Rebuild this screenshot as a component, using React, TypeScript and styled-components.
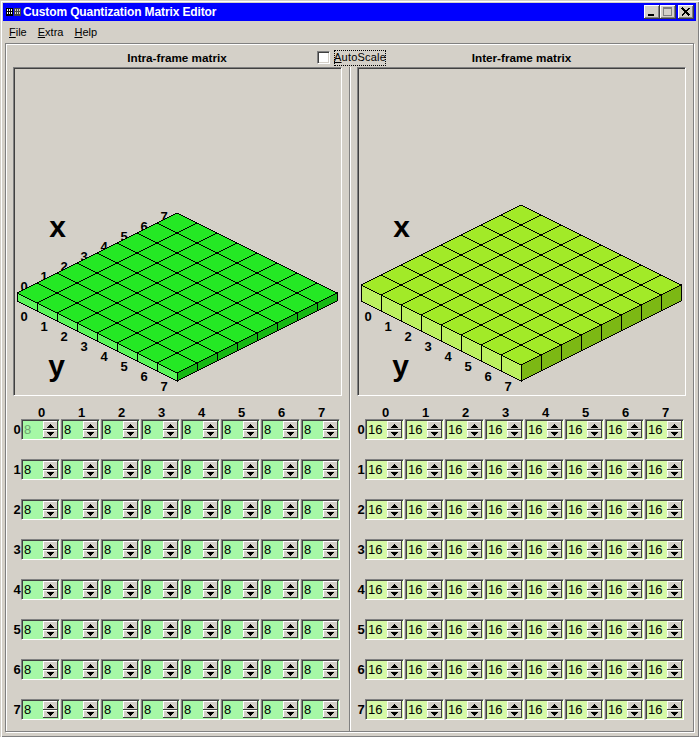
import React from "react";
import styled, { createGlobalStyle } from "styled-components";

const Global = createGlobalStyle`
  html, body { margin: 0; padding: 0; background: #d4d0c8; }
  * { box-sizing: border-box; }
`;

const Win = styled.div`
  width: 699px;
  height: 737px;
  padding: 3px;
  background: #d4d0c8;
  font-family: "Liberation Sans", Arial, sans-serif;
  font-size: 12px;
  color: #000;
  box-shadow: inset 1px 1px 0 #d4d0c8, inset 2px 2px 0 #fff, inset -1px -1px 0 #808080;
  overflow: hidden;
`;

const TitleBar = styled.div`
  height: 18px;
  background: #0000ff;
  color: #fff;
  display: flex;
  align-items: center;
  padding: 0 2px 0 3px;
`;

const TitleText = styled.span`
  font-weight: 700;
  font-size: 12px;
  letter-spacing: -0.12px;
  margin-left: 2px;
  flex: 1;
`;

const WinButtons = styled.div`
  display: flex;
  align-items: center;
`;

const WinButton = styled.div<{ $gap?: number }>`
  width: 16px;
  height: 14px;
  margin-left: ${(p) => p.$gap ?? 0}px;
  background: #d4d0c8;
  box-shadow: inset -1px -1px 0 #404040, inset 1px 1px 0 #fff, inset -2px -2px 0 #808080;
  display: flex;
  align-items: center;
  justify-content: center;
`;

const MenuBar = styled.div`
  height: 22px;
  display: flex;
  align-items: center;
  padding: 0 0 0 6px;
  gap: 11px;
  font-size: 11px;
`;

const MenuItem = styled.span`
  & > u { text-underline-offset: 1px; }
`;

const Frame = styled.div`
  margin: 0 2px 0 2px;
  width: 689px;
  height: 689px;
  border: 1px solid #808080;
  box-shadow: inset 1px 1px 0 #fff, 1px 1px 0 #fff;
  display: flex;
  flex-direction: column;
`;

const Header = styled.div`
  height: 23px;
  padding-left: 7px;
  display: grid;
  grid-template-columns: 304px 69px 271px;
  align-items: center;
`;

const MatrixTitle = styled.div<{ $pad?: number }>`
  font-weight: 700;
  font-size: 11.7px;
  text-align: center;
  padding-left: ${(p) => p.$pad ?? 0}px;
  padding-top: 4px;
`;

const Auto = styled.label`
  display: flex;
  align-items: center;
  padding-top: 4px;
`;

const Check = styled.span`
  width: 13px;
  height: 13px;
  background: #fff;
  border-style: solid;
  border-width: 1px;
  border-color: #808080 #fff #fff #808080;
  box-shadow: inset 1px 1px 0 #404040, inset -1px -1px 0 #d4d0c8;
`;

const AutoText = styled.span`
  margin-left: 4px;
  width: 52px;
  height: 16px;
  line-height: 14px;
  text-align: center;
  outline: 1px dotted #000;
  outline-offset: -1px;
  font-size: 11px;
  letter-spacing: 0.2px;
`;

const Body = styled.div`
  flex: 1;
  display: flex;
`;

const Column = styled.div<{ $first?: boolean }>`
  width: ${(p) => (p.$first ? 344 : 343)}px;
  padding-left: ${(p) => (p.$first ? 7 : 6)}px;
  ${(p) => (p.$first ? "border-right: 1px solid #808080;" : "border-left: 1px solid #fff;")}
`;

const Panel = styled.div`
  width: 329px;
  height: 329px;
  border-style: solid;
  border-width: 1px;
  border-color: #808080 #fff #fff #808080;
  box-shadow: inset 1px 1px 0 #404040;
  & > svg { display: block; width: 327px; height: 327px; }
`;

const AxisText = styled.text<{ $big?: boolean }>`
  font-family: "Liberation Sans", Arial, sans-serif;
  font-weight: 700;
  font-size: ${(p) => (p.$big ? 30 : 13)}px;
  text-anchor: middle;
  fill: #000;
`;

const ColHead = styled.div`
  height: 23px;
  display: grid;
  grid-template-columns: 8px repeat(8, 39px);
  column-gap: 1px;
  align-items: end;
  font-weight: 700;
  font-size: 13px;
  text-align: center;
  line-height: 12px;
`;

const Rows = styled.div`
  display: flex;
  flex-direction: column;
  gap: 19px;
`;

const Row = styled.div`
  height: 21px;
  display: grid;
  grid-template-columns: 7px repeat(8, 39px);
  column-gap: 1px;
  align-items: center;
  & > b { font-size: 13px; text-align: center; width: 8px; }
`;

const Spin = styled.div<{ $bg: string }>`
  width: 39px;
  height: 21px;
  display: flex;
  background: ${(p) => p.$bg};
  border-style: solid;
  border-width: 1px;
  border-color: #808080 #fff #fff #808080;
  box-shadow: inset 1px 1px 0 #404040;
  padding: 1px;
`;

const SpinValue = styled.input<{ $muted?: boolean }>`
  width: 20px;
  min-width: 0;
  height: 16px;
  border: 0;
  outline: 0;
  padding: 0 0 0 1px;
  margin: 0;
  background: transparent;
  font-family: "Liberation Sans", Arial, sans-serif;
  font-size: 13px;
  color: ${(p) => (p.$muted ? "#6f9f6f" : "#000")};
`;

const SpinButtons = styled.div`
  width: 15px;
  height: 17px;
  display: flex;
  flex-direction: column;
`;

const SpinButton = styled.div<{ $h: number }>`
  height: ${(p) => p.$h}px;
  background: #d4d0c8;
  box-shadow: inset -1px -1px 0 #404040, inset 1px 1px 0 #fff;
  display: flex;
  align-items: center;
  justify-content: center;
  & > svg { display: block; }
`;

const range = [0, 1, 2, 3, 4, 5, 6, 7];

type Colors = { top: string; left: string; right: string };

function Surface({ dx, top, h, colors, id }: { dx: number; top: number; h: number; colors: Colors; id: string }) {
  const cx = 177 + dx;
  const pt = (i: number, j: number): [number, number] => [cx + (i - j) * 20, top + (i + j) * 10];
  const [lx, ly] = pt(0, 8);
  const [rx, ry] = pt(8, 0);
  const [fx, fy] = pt(8, 8);
  const [tx, ty] = pt(0, 0);
  return (
    <svg viewBox={`${14 + (dx ? 344 : 0)} 68 327 327`} aria-label={id}>
      {range.map((n) => (
        <AxisText key={`x${n}`} x={24 + dx + n * 20} y={291 - n * 10}>{n}</AxisText>
      ))}
      {range.map((n) => (
        <AxisText key={`y${n}`} x={24 + dx + n * 20} y={321 + n * 10}>{n}</AxisText>
      ))}
      <AxisText $big x={57.5 + dx} y={237}>x</AxisText>
      <AxisText $big x={56.5 + dx} y={376}>y</AxisText>
      <g shapeRendering="crispEdges" stroke="#000" strokeWidth={1}>
        <polygon points={`${lx},${ly} ${fx},${fy} ${fx},${fy + h} ${lx},${ly + h}`} fill={colors.left} />
        <polygon points={`${fx},${fy} ${rx},${ry} ${rx},${ry + h} ${fx},${fy + h}`} fill={colors.right} />
        <polygon points={`${tx},${ty} ${rx},${ry} ${fx},${fy} ${lx},${ly}`} fill={colors.top} />
        {[1, 2, 3, 4, 5, 6, 7].map((n) => {
          const a = pt(n, 0), b = pt(n, 8), c = pt(0, n), d = pt(8, n);
          return (
            <g key={n}>
              <line x1={a[0]} y1={a[1]} x2={b[0]} y2={b[1]} />
              <line x1={c[0]} y1={c[1]} x2={d[0]} y2={d[1]} />
              <line x1={b[0]} y1={b[1]} x2={b[0]} y2={b[1] + h} />
              <line x1={d[0]} y1={d[1]} x2={d[0]} y2={d[1] + h} />
            </g>
          );
        })}
      </g>
    </svg>
  );
}

function Arrow({ down }: { down?: boolean }) {
  return (
    <svg width="7" height="4" viewBox="0 0 7 4" shapeRendering="crispEdges">
      <path d={down ? "M0 0H7V1H6V2H5V3H4V4H3V3H2V2H1V1H0Z" : "M3 0H4V1H5V2H6V3H7V4H0V3H1V2H2V1H3Z"} fill="#000" />
    </svg>
  );
}

function Matrix({ value, bg, muted }: { value: string; bg: string; muted?: boolean }) {
  return (
    <>
      <ColHead>
        <span />
        {range.map((n) => <span key={n}>{n}</span>)}
      </ColHead>
      <Rows>
        {range.map((r) => (
          <Row key={r}>
            <b>{r}</b>
            {range.map((c) => (
              <Spin key={c} $bg={bg}>
                <SpinValue readOnly value={value} $muted={muted && r === 0 && c === 0} />
                <SpinButtons>
                  <SpinButton $h={9}><Arrow /></SpinButton>
                  <SpinButton $h={8}><Arrow down /></SpinButton>
                </SpinButtons>
              </Spin>
            ))}
          </Row>
        ))}
      </Rows>
    </>
  );
}

function AppIcon() {
  return (
    <svg width="15" height="8" viewBox="0 0 15 8" shapeRendering="crispEdges">
      <rect x="0" y="0" width="7" height="8" fill="#000" />
      <rect x="8" y="0" width="7" height="8" fill="#444" />
      {[0, 1].map((k) => (
        <g key={k} fill={k ? "#d4d0c8" : "#fff"}>
          {[0, 1, 2].map((i) => [0, 1].map((j) => (
            <rect key={`${i}${j}`} x={k * 8 + 1 + i * 2} y={1 + j * 3} width="1" height="2" />
          )))}
        </g>
      ))}
    </svg>
  );
}

export default function App() {
  return (
    <Win>
      <Global />
      <TitleBar>
        <AppIcon />
        <TitleText>Custom Quantization Matrix Editor</TitleText>
        <WinButtons>
          <WinButton>
            <svg width="10" height="10" viewBox="0 0 10 10" shapeRendering="crispEdges"><rect x="1" y="7" width="6" height="2" fill="#000" /></svg>
          </WinButton>
          <WinButton>
            <svg width="10" height="10" viewBox="0 0 10 10" shapeRendering="crispEdges"><rect x="0.5" y="0.5" width="8" height="8" fill="none" stroke="#808080" /><rect x="0" y="0" width="9" height="2" fill="#808080" /></svg>
          </WinButton>
          <WinButton $gap={2}>
            <svg width="10" height="10" viewBox="0 0 10 10"><path d="M1 1 L8.5 8.5 M8.5 1 L1 8.5" stroke="#000" strokeWidth="1.7" shapeRendering="crispEdges" /></svg>
          </WinButton>
        </WinButtons>
      </TitleBar>
      <MenuBar>
        <MenuItem><u>F</u>ile</MenuItem>
        <MenuItem><u>E</u>xtra</MenuItem>
        <MenuItem><u>H</u>elp</MenuItem>
      </MenuBar>
      <Frame>
        <Header>
          <MatrixTitle $pad={24}>Intra-frame matrix</MatrixTitle>
          <Auto>
            <Check />
            <AutoText><u>A</u>utoScale</AutoText>
          </Auto>
          <MatrixTitle>Inter-frame matrix</MatrixTitle>
        </Header>
        <Body>
          <Column $first>
            <Panel>
              <Surface id="Intra-frame surface" dx={0} top={213} h={8} colors={{ top: "#24e824", left: "#5cf55c", right: "#14b814" }} />
            </Panel>
            <Matrix value="8" bg="#a6f8a6" muted />
          </Column>
          <Column>
            <Panel>
              <Surface id="Inter-frame surface" dx={344} top={205} h={16} colors={{ top: "#a2ea28", left: "#bcf060", right: "#7cb814" }} />
            </Panel>
            <Matrix value="16" bg="#d6f9a6" />
          </Column>
        </Body>
      </Frame>
    </Win>
  );
}
